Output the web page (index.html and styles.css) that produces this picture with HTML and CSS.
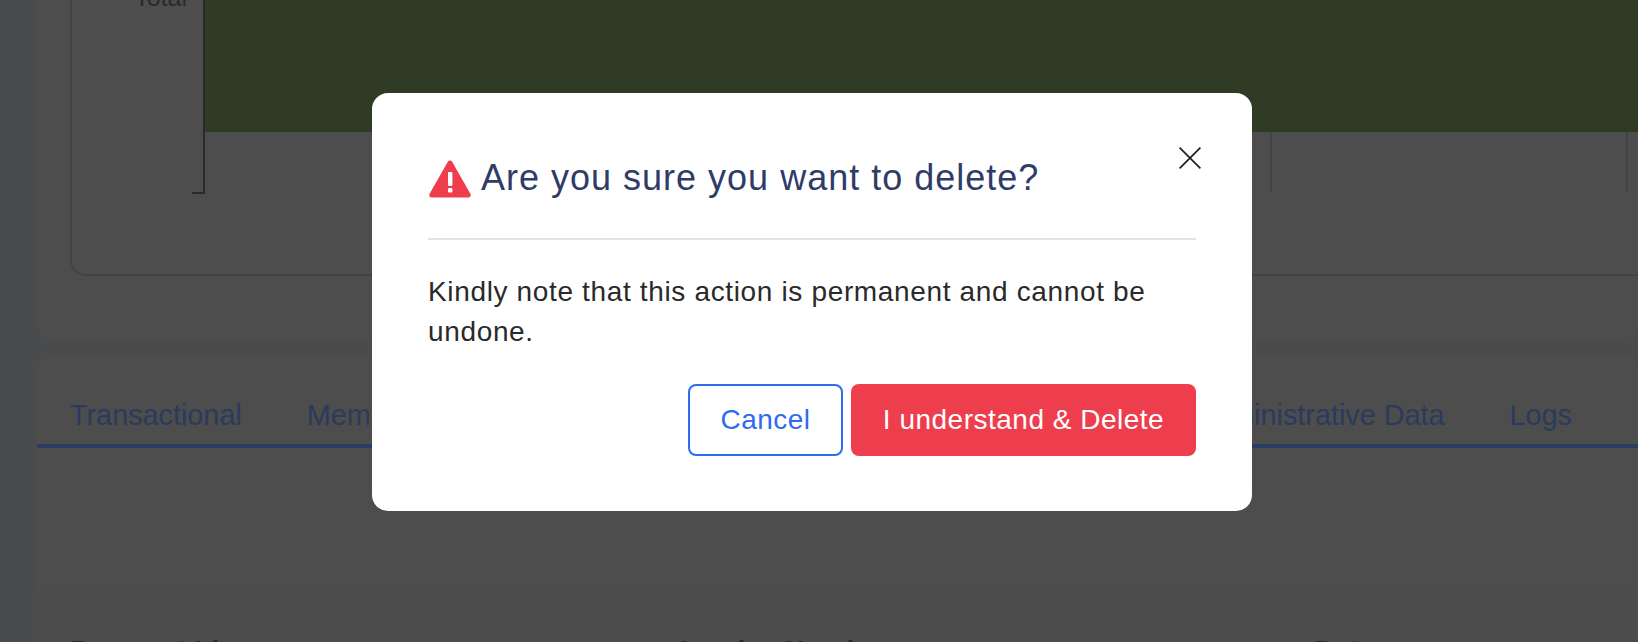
FILE: index.html
```html
<!DOCTYPE html>
<html lang="en">
<head>
<meta charset="utf-8">
<title>Delete confirmation</title>
<link rel="stylesheet" href="styles.css">
</head>
<body>
<div class="page">
  <main class="content">
    <section class="card card-chart">
      <div class="chart-box">
        <div class="chart">
          <div class="axis-labels"><span class="axis-label">Total</span></div>
          <div class="plot">
            <div class="bar"></div>
            <div class="grid">
              <span class="gridline"></span>
              <span class="gridline"></span>
              <span class="gridline"></span>
              <span class="gridline"></span>
            </div>
          </div>
        </div>
      </div>
    </section>
    <section class="card card-tabs">
      <nav class="tabs">
        <a class="tab">Transactional</a>
        <a class="tab">Membership Data</a>
        <a class="tab">Communication</a>
        <a class="tab">Payments</a>
        <a class="tab tab-end">Administrative Data</a>
        <a class="tab">Logs</a>
      </nav>
      <div class="fields">
        <span class="field">Payment Id</span>
        <span class="field">Invoice Number</span>
        <span class="field">Date</span>
      </div>
    </section>
  </main>
</div>
<div class="backdrop">
  <div class="modal">
    <button class="close" aria-label="Close">
      <svg viewBox="0 0 22 22" width="22" height="22"><path d="M.6 .6L21.4 21.4M21.4 .6L.6 21.4" fill="none" stroke="#1f1f1f" stroke-width="1.7"/></svg>
    </button>
    <h2 class="modal-title">
      <svg class="warn" viewBox="0 0 42 38" width="42" height="38"><path d="M21 3L39.2 35H2.8Z" fill="#ee3d4d" stroke="#ee3d4d" stroke-width="5" stroke-linejoin="round"/><rect x="19" y="12" width="4.4" height="14" rx="1" fill="#fff"/><rect x="19" y="28" width="4.4" height="4.4" rx="1" fill="#fff"/></svg>
      <span>Are you sure you want to delete?</span>
    </h2>
    <hr class="divider">
    <p class="modal-text">Kindly note that this action is permanent and cannot be undone.</p>
    <div class="actions">
      <button class="btn btn-outline">Cancel</button>
      <button class="btn btn-danger">I understand &amp; Delete</button>
    </div>
  </div>
</div>
</body>
</html>
```
FILE: styles.css
```css
* { box-sizing: border-box; }
html, body { margin: 0; height: 100%; overflow: hidden; }
body { font-family: "Liberation Sans", Arial, sans-serif; background: #4a4b4c; color: #212529; }
.page { height: 642px; overflow: hidden; }
.content { margin-left: 37px; display: flex; flex-direction: column; gap: 16px; }
.card { background: #4d4d4d; }
.card-chart { height: 340px; padding: 0 0 0 33px; border-radius: 0 0 16px 16px; }
.chart-box { height: 276px; border: 2px solid #42424a; border-right: 0; border-top: 0; border-radius: 0 0 0 16px; overflow: hidden; }
.chart { display: flex; height: 194px; }
.axis-labels { width: 133px; height: 194px; border-right: 2px solid #2a2a2d; position: relative; display: flex; justify-content: flex-end; padding-right: 16px; }
.axis-labels::after { content: ""; position: absolute; right: 0; bottom: 0; width: 11px; height: 2px; background: #2a2a2d; }
.axis-label { font-size: 25px; line-height: 24px; margin-top: -15px; color: #2a2a2d; }
.plot { flex: 1; }
.bar { height: 132px; background: #303b25; }
.grid { height: 60px; display: flex; justify-content: flex-end; gap: 354px; padding-right: 10px; }
.gridline { width: 2px; height: 60px; background: #42424a; }
.card-tabs { padding-top: 42px; height: 400px; border-radius: 16px 16px 0 0; background: linear-gradient(#4d4d4d 231px, #4b4c4b 231px); }
.tabs { display: flex; gap: 65px; padding: 0 66px 0 33px; height: 50px; border-bottom: 4px solid #2b3d63; white-space: nowrap; }
.tab { font-size: 28.8px; line-height: 34px; color: #2a3b5c; }
.tab-end { margin-left: auto; }
.fields { margin-top: 185px; padding-left: 33px; display: grid; grid-template-columns: 610px 634px 1fr; }
.field { font-size: 28px; font-weight: 700; line-height: 36px; color: #2a2a2d; white-space: nowrap; }

.backdrop { position: fixed; inset: 0; display: flex; align-items: flex-start; justify-content: center; padding: 93px 14px 0 0; }
.modal { position: relative; width: 880px; height: 418px; background: #fff; border-radius: 16px; padding: 60px 56px 56px; }
.close { position: absolute; top: 54px; right: 51px; padding: 0; border: 0; background: none; width: 22px; height: 22px; }
.close svg { display: block; }
.modal-title { display: flex; align-items: center; gap: 10px; margin: 0; height: 50px; font-size: 36px; font-weight: 400; letter-spacing: 1px; color: #2f3c68; }
.warn { flex: none; margin: 2px 0 0 1px; }
.divider { margin: 35px 0 0; border: 0; height: 2px; background: #e2e2e2; }
.modal-text { margin: 32px 0 0; font-size: 28px; line-height: 40px; letter-spacing: .65px; color: #2a2a2a; }
.actions { display: flex; justify-content: flex-end; gap: 8px; margin-top: 32px; }
.btn { height: 72px; border-radius: 8px; font: 28px "Liberation Sans", Arial, sans-serif; letter-spacing: .5px; }
.btn-outline { width: 155px; background: #fff; border: 2px solid #2f6bf0; color: #2f6bf0; }
.btn-danger { width: 345px; background: #ee3d4d; border: 0; color: #fff; }
```
